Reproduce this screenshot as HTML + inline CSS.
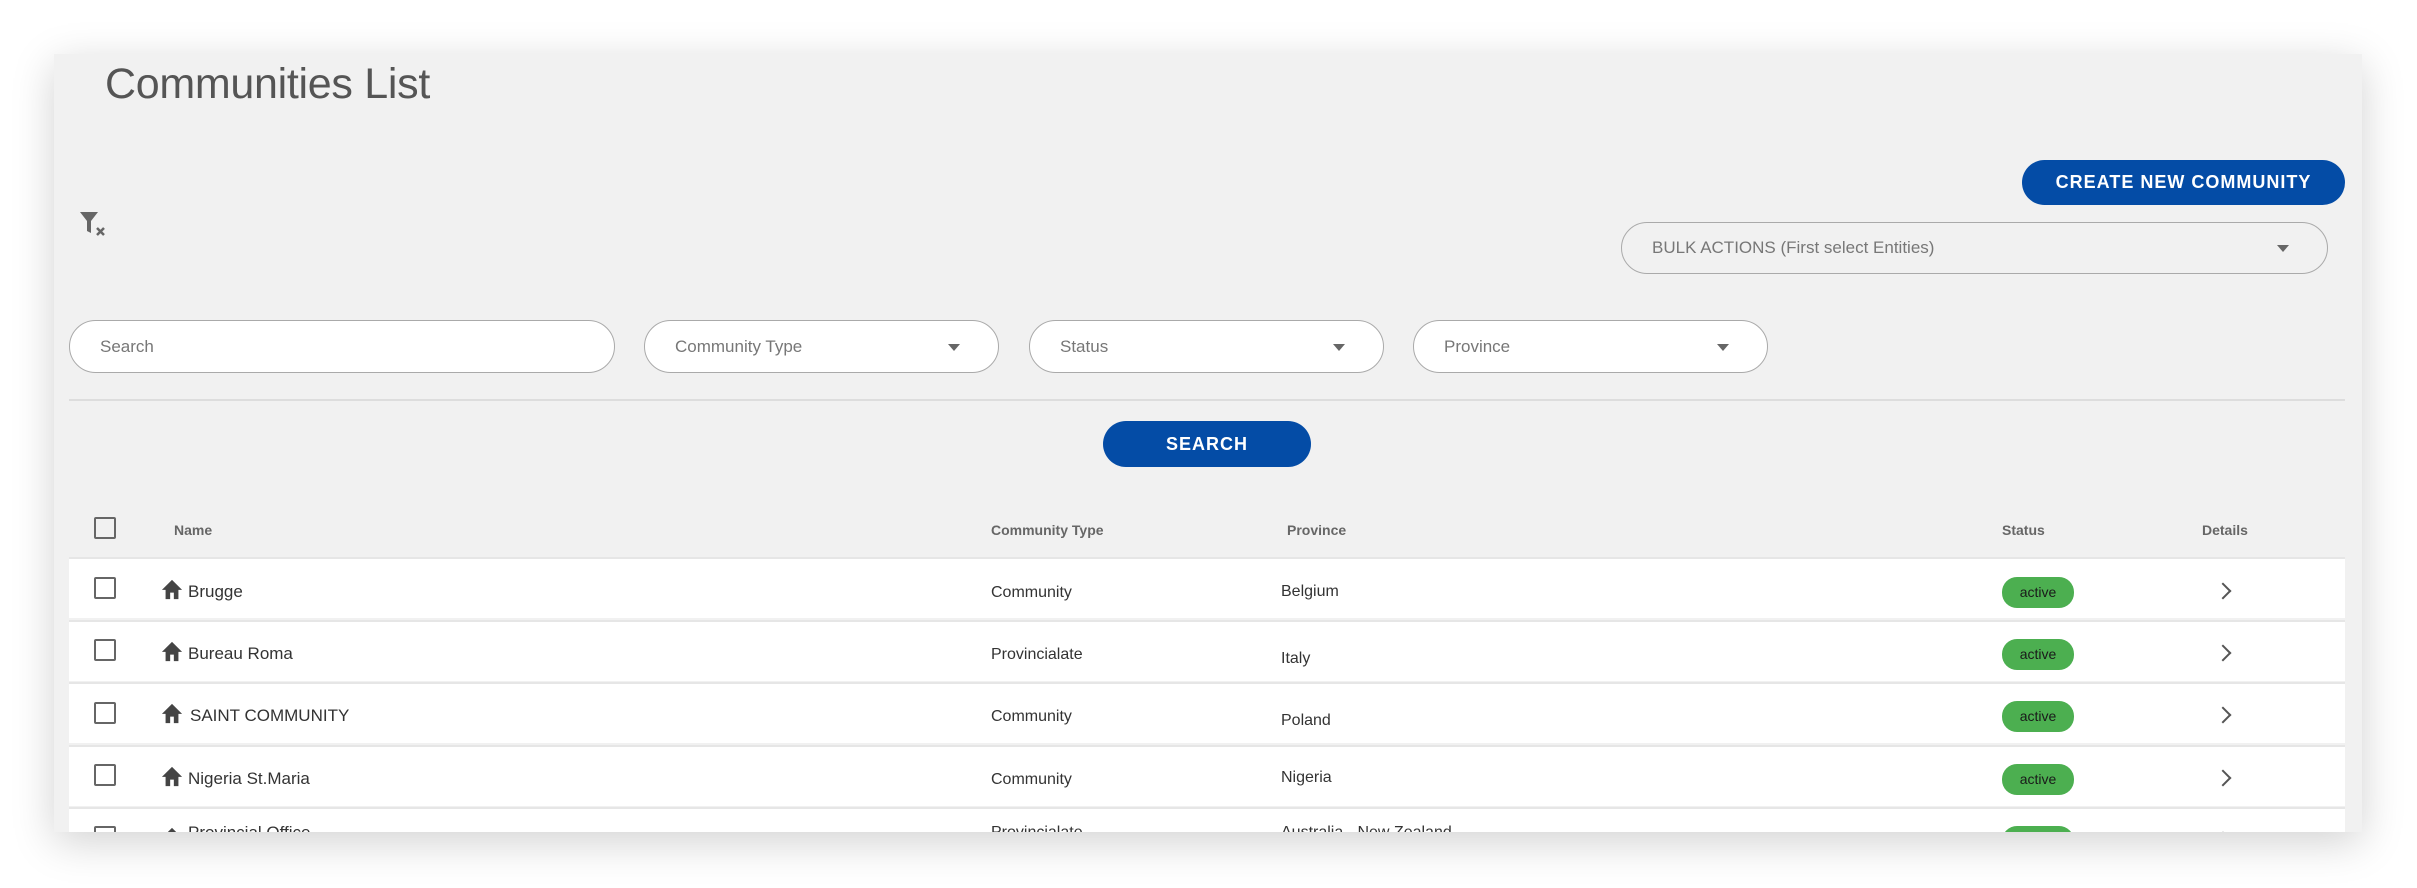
<!DOCTYPE html>
<html><head><meta charset="utf-8"><style>
*{box-sizing:border-box;margin:0;padding:0}
body{width:2417px;height:888px;background:#fff;font-family:"Liberation Sans",sans-serif;position:relative;overflow:hidden}
.panel{position:absolute;left:54px;top:54px;width:2308px;height:778px;background:#f1f1f1;box-shadow:0 10px 40px rgba(0,0,0,.18);overflow:hidden}
.a{position:absolute}
.title{left:51px;top:6px;font-size:43px;color:#555;letter-spacing:-.3px}
.btn{background:#044ca6;color:#fff;border-radius:24px;text-align:center;font-weight:bold;letter-spacing:1px;font-size:18px}
.sel{background:#fff;border:1.5px solid #aaa;border-radius:27px;color:#777;font-size:17px;padding-left:30px;display:flex;align-items:center}
.sel .tri{position:absolute;right:38px;top:50%;margin-top:-3px;width:0;height:0;border-left:6px solid transparent;border-right:6px solid transparent;border-top:7px solid #666}
.hd{font-size:14px;font-weight:bold;color:#666;top:468px}
.row{position:absolute;left:15px;width:2276px;height:61px;background:#fff;border-top:2px solid #e6e6e6}
.cb{position:absolute;width:22px;height:22px;border:2px solid #666;border-radius:2px}
.t{position:absolute;font-size:17px;color:#333}
.pill{position:absolute;left:1933px;width:72px;height:31px;background:#4caf50;border-radius:15px;color:#1a1a1a;font-size:14px;text-align:center;line-height:31px}
.chev{position:absolute;left:2150px;width:12px;height:12px;border-right:2px solid #555;border-top:2px solid #555;transform:rotate(45deg)}
.h{position:absolute;width:22px;height:22px}
</style></head><body>
<div class="panel">
<div class="a title">Communities List</div>
<svg class="a" style="left:25px;top:156px" width="30" height="28" viewBox="0 0 30 28"><path d="M1 2h18l-7 9v12l-4-2V11z" fill="#666"/><path d="M18 18l7 7M25 18l-7 7" stroke="#666" stroke-width="2.5"/></svg>
<div class="a btn" style="left:1968px;top:106px;width:323px;height:45px;line-height:45px">CREATE NEW COMMUNITY</div>
<div class="a sel" style="left:1567px;top:168px;width:707px;height:52px;background:#f1f1f1">BULK ACTIONS (First select Entities)<span class="tri"></span></div>
<div class="a sel" style="left:15px;top:266px;width:546px;height:53px">Search</div>
<div class="a sel" style="left:590px;top:266px;width:355px;height:53px">Community Type<span class="tri"></span></div>
<div class="a sel" style="left:975px;top:266px;width:355px;height:53px">Status<span class="tri"></span></div>
<div class="a sel" style="left:1359px;top:266px;width:355px;height:53px">Province<span class="tri"></span></div>
<div class="a" style="left:15px;top:345px;width:2276px;height:2px;background:#ddd"></div>
<div class="a btn" style="left:1049px;top:367px;width:208px;height:46px;line-height:46px">SEARCH</div>
<div class="cb" style="left:40px;top:463px"></div>
<div class="a hd" style="left:120px">Name</div>
<div class="a hd" style="left:937px">Community Type</div>
<div class="a hd" style="left:1233px">Province</div>
<div class="a hd" style="left:1948px">Status</div>
<div class="a hd" style="left:2148px">Details</div>

<div class="row" style="top:503px"></div>
<div class="row" style="top:566px"></div>
<div class="row" style="top:628px"></div>
<div class="row" style="top:691px"></div>
<div class="row" style="top:753px"></div>

<div class="cb" style="left:40px;top:523px"></div>
<svg class="h" style="left:107px;top:524px" viewBox="0 0 24 24"><path d="M12 2L1 13h4v10h5v-7h4v7h5V13h4z" fill="#444"/></svg>
<div class="t" style="left:134px;top:528px">Brugge</div>
<div class="t" style="left:937px;top:530px;font-size:16px">Community</div>
<div class="t" style="left:1227px;top:529px;font-size:16px">Belgium</div>
<div class="pill" style="top:523px;left:1948px">active</div>
<div class="chev" style="left:2163px;top:531px"></div>

<div class="cb" style="left:40px;top:585px"></div>
<svg class="h" style="left:107px;top:586px" viewBox="0 0 24 24"><path d="M12 2L1 13h4v10h5v-7h4v7h5V13h4z" fill="#444"/></svg>
<div class="t" style="left:134px;top:590px">Bureau Roma</div>
<div class="t" style="left:937px;top:592px;font-size:16px">Provincialate</div>
<div class="t" style="left:1227px;top:596px;font-size:16px">Italy</div>
<div class="pill" style="top:585px;left:1948px">active</div>
<div class="chev" style="left:2163px;top:593px"></div>

<div class="cb" style="left:40px;top:648px"></div>
<svg class="h" style="left:107px;top:648px" viewBox="0 0 24 24"><path d="M12 2L1 13h4v10h5v-7h4v7h5V13h4z" fill="#444"/></svg>
<div class="t" style="left:136px;top:652px">SAINT COMMUNITY</div>
<div class="t" style="left:937px;top:654px;font-size:16px">Community</div>
<div class="t" style="left:1227px;top:658px;font-size:16px">Poland</div>
<div class="pill" style="top:647px;left:1948px">active</div>
<div class="chev" style="left:2163px;top:655px"></div>

<div class="cb" style="left:40px;top:710px"></div>
<svg class="h" style="left:107px;top:711px" viewBox="0 0 24 24"><path d="M12 2L1 13h4v10h5v-7h4v7h5V13h4z" fill="#444"/></svg>
<div class="t" style="left:134px;top:715px">Nigeria St.Maria</div>
<div class="t" style="left:937px;top:717px;font-size:16px">Community</div>
<div class="t" style="left:1227px;top:715px;font-size:16px">Nigeria</div>
<div class="pill" style="top:710px;left:1948px">active</div>
<div class="chev" style="left:2163px;top:718px"></div>

<div class="cb" style="left:40px;top:772px"></div>
<svg class="h" style="left:107px;top:772px" viewBox="0 0 24 24"><path d="M12 2L1 13h4v10h5v-7h4v7h5V13h4z" fill="#444"/></svg>
<div class="t" style="left:134px;top:769px">Provincial Office</div>
<div class="t" style="left:937px;top:770px;font-size:16px">Provincialate</div>
<div class="t" style="left:1227px;top:770px;font-size:16px">Australia - New Zealand</div>
<div class="pill" style="top:772px;left:1948px">active</div>
<div class="chev" style="left:2163px;top:780px"></div>
</div>
</body></html>
